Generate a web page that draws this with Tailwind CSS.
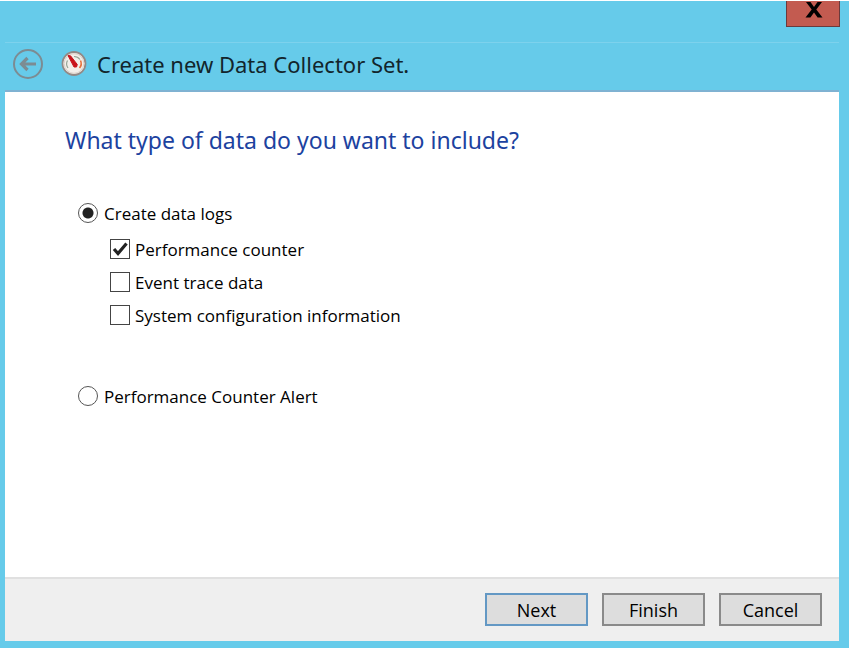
<!DOCTYPE html>
<html lang="en">
<head>
<meta charset="utf-8">
<meta name="viewport" content="width=device-width, initial-scale=1">
<title>Create new Data Collector Set</title>
<script src="https://cdn.jsdelivr.net/npm/@tailwindcss/browser@4"></script>
</head>
<body class="font-['Open_Sans','Noto_Sans',sans-serif] text-black">
<div class="flex min-h-screen flex-col border-t border-white bg-[#66cbea] pr-[10px] pb-[7px] pl-[5px]">
  <div class="-mr-px flex h-[41px] items-start justify-end">
    <button type="button" aria-label="Close" class="flex h-[26px] w-[54px] items-start justify-center border border-t-0 border-[#6b3a3c] bg-[#c35b50]">
      <svg class="ml-[2px] mt-px h-[16px] w-[18px]" viewBox="0 0 18 16" aria-hidden="true"><path d="M1 0H5.500L9 5L12.500 0H17L11.300 7.500L17.500 15.500H12.600L9 10.500L5.400 15.500H.5L6.700 7.500Z" fill="#000"/></svg>
    </button>
  </div>
  <header class="flex h-[50px] items-center gap-[17px] border-t border-b-2 border-t-[#7dd2ed] border-b-[#7fb2d2] pb-[6px] pl-[7px]">
    <button type="button" aria-label="Back" class="h-[32px] w-[32px]">
      <svg class="h-full w-full" viewBox="0 0 32 32" fill="none" stroke="#7c8c93" aria-hidden="true"><circle cx="16" cy="16" r="14" stroke-width="2"/><path d="M24 16H10M15.500 10L9.500 16L15.500 22" stroke-width="3.200"/></svg>
    </button>
    <div class="flex items-center gap-[10px]">
      <svg class="h-[26px] w-[26px]" viewBox="0 0 26 26" fill="none" aria-hidden="true">
        <circle cx="13" cy="12.500" r="11.500" fill="#f3efea" stroke="#938a87" stroke-width="1.800"/>
        <circle cx="13" cy="12.500" r="9.800" stroke="#ddd2ca" stroke-width="1"/>
        <path d="M7 17A7 7 0 0 1 6.500 9.500M13 5.500A7.500 7.500 0 0 1 19 8.500" stroke="#93a293" stroke-width="1.200"/>
        <path d="M19.500 9.500A7 7 0 0 1 18.500 17" stroke="#e8713c" stroke-width="1.600"/>
        <path d="M7 4.500L9.500 4.800L16.300 13.500L15.500 16L13 16Z" fill="#c9141c" stroke="#c9141c" stroke-width="1" stroke-linejoin="round"/>
      </svg>
      <h1 class="font-['Noto_Sans',sans-serif] text-[22px] leading-[32px] text-[#12252c]">Create new Data Collector Set.</h1>
    </div>
  </header>
  <main class="flex-1 bg-white px-[60px] pt-[31px]">
    <form id="wizard">
      <h2 class="font-['Noto_Sans',sans-serif] text-[23px] leading-[34px] text-[#1c429f]">What type of data do you want to include?</h2>
      <fieldset aria-label="Data type" class="mt-[44px] pl-[13px]">
        <div class="flex h-[26px] items-center gap-[6px]">
          <input id="logs" name="kind" type="radio" checked class="-mt-[2px] h-[20px] w-[20px] appearance-none rounded-full border border-[#555] bg-white bg-[radial-gradient(circle,#222_5px,transparent_6px)]">
          <label for="logs" class="text-[17px] leading-[26px]">Create data logs</label>
        </div>
        <div class="mt-[10px] flex flex-col gap-[7px] pl-[32px]">
          <div class="flex h-[26px] items-center gap-[5px]">
            <span class="-mt-[2px] grid h-[20px] w-[20px]">
              <input id="counter" type="checkbox" checked class="peer col-start-1 row-start-1 h-full w-full appearance-none border border-[#444] bg-white">
              <svg class="pointer-events-none invisible col-start-1 row-start-1 h-full w-full peer-checked:visible" viewBox="0 0 20 20" fill="none" aria-hidden="true"><path d="M4 10L8 14.500L16.500 4.500" stroke="#222" stroke-width="3.200"/></svg>
            </span>
            <label for="counter" class="text-[17px] leading-[26px]">Performance counter</label>
          </div>
          <div class="flex h-[26px] items-center gap-[5px]">
            <input id="trace" type="checkbox" class="-mt-[2px] h-[20px] w-[20px] appearance-none border border-[#444] bg-white">
            <label for="trace" class="text-[17px] leading-[26px]">Event trace data</label>
          </div>
          <div class="flex h-[26px] items-center gap-[5px]">
            <input id="config" type="checkbox" class="-mt-[2px] h-[20px] w-[20px] appearance-none border border-[#444] bg-white">
            <label for="config" class="text-[17px] leading-[26px]">System configuration information</label>
          </div>
        </div>
        <div class="mt-[55px] flex h-[26px] items-center gap-[6px]">
          <input id="alert" name="kind" type="radio" class="-mt-[2px] h-[20px] w-[20px] appearance-none rounded-full border border-[#555] bg-white">
          <label for="alert" class="text-[17px] leading-[26px]">Performance Counter Alert</label>
        </div>
      </fieldset>
    </form>
  </main>
  <footer class="flex h-[64px] items-start justify-end gap-[14px] border-t-2 border-[#e0e0e0] bg-[#efefef] pt-[14px] pr-[17px]">
    <button type="submit" form="wizard" class="h-[33px] w-[103px] border-2 border-[#6398c4] bg-[#dddddd] text-[18px] leading-[26px]">Next</button>
    <button type="button" class="h-[33px] w-[103px] border-2 border-[#8a8a8a] bg-[#dddddd] text-[18px] leading-[26px]">Finish</button>
    <button type="button" class="h-[33px] w-[103px] border-2 border-[#8a8a8a] bg-[#dddddd] text-[18px] leading-[26px]">Cancel</button>
  </footer>
</div>
</body>
</html>
